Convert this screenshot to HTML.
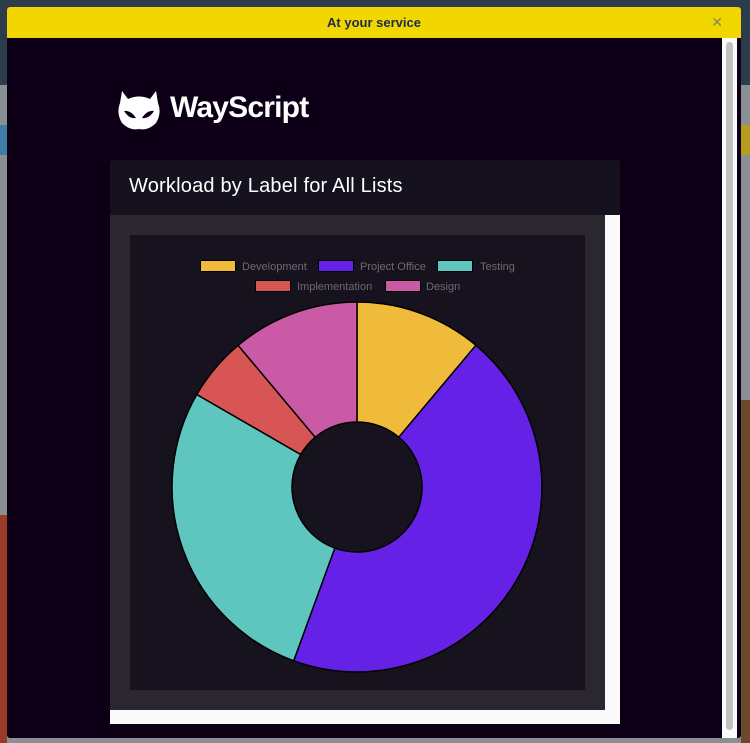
<!DOCTYPE html>
<html><head><meta charset="utf-8"><style>
*{margin:0;padding:0;box-sizing:border-box}
body{width:750px;height:743px;overflow:hidden;position:relative;background:#8a8f94;font-family:"Liberation Sans",sans-serif}
.bgtop{position:absolute;left:0;top:0;width:750px;height:85px;background:#2d3c4a}
.bgl1{position:absolute;left:0;top:125px;width:7px;height:30px;background:#3d7fa6}
.bgr1{position:absolute;left:741px;top:125px;width:9px;height:30px;background:#b59c1c}
.bglo{position:absolute;left:0;top:515px;width:7px;height:228px;background:#9a3a2a}
.bgro{position:absolute;left:741px;top:400px;width:9px;height:343px;background:#6b4a2a}
.modal{position:absolute;left:7px;top:7px;width:734px;height:731px;background:#0d0016;border-radius:3px;overflow:hidden}
.hdr{height:31px;background:#f2d600;color:#1e2a4a;font-weight:bold;font-size:13px;text-align:center;line-height:31px}
.x{position:absolute;right:18px;top:0;line-height:31px;color:#8a8650;font-size:14px}
.track{position:absolute;left:715px;top:31px;width:15px;height:700px;background:#fafafa}
.thumb{position:absolute;left:719px;top:35px;width:7px;height:688px;background:#c1c1c1;border-radius:4px}
.logo{position:absolute;left:170px;top:91px;color:#fff;font-weight:bold;font-size:30px;letter-spacing:-0.8px}
.ch{position:absolute;left:110px;top:160px;width:510px;height:55px;background:#15111e;border-radius:3px 3px 0 0;color:#fff;font-size:20px;padding:15px 0 0 19px;letter-spacing:0.2px}
.white{position:absolute;left:110px;top:215px;width:510px;height:509px;background:#fafafa}
.gray{position:absolute;left:110px;top:215px;width:495px;height:495px;background:#2a2730}
.inner{position:absolute;left:130px;top:235px;width:455px;height:455px;background:#16121e}
</style></head><body>
<div class="bgtop"></div><div class="bgl1"></div><div class="bgr1"></div><div class="bglo"></div><div class="bgro"></div>
<div class="modal"><div class="hdr">At your service</div><div class="x">✕</div>
<div class="track"></div><div class="thumb"></div></div>
<svg style="position:absolute;left:116px;top:91px" width="46" height="40" viewBox="0 0 46 40">
<path d="M6 0 L12 8 Q23 3 34 8 L40 0 L42 12 Q46 22 40 32 Q32 40 23 38 Q14 40 6 32 Q0 22 4 12 Z" fill="#fff"/>
<path d="M8 20 Q15 19 20 27 Q13 28 8 20Z M38 20 Q31 19 26 27 Q33 28 38 20Z" fill="#0d0016"/>
</svg>
<div class="logo">WayScript</div>
<div class="ch">Workload by Label for All Lists</div>
<div class="white"></div><div class="gray"></div><div class="inner"></div>
<svg style="position:absolute;left:0;top:0" width="750" height="743">
<g font-family="Liberation Sans,sans-serif" font-size="11" fill="#6e6a74">
<rect x="200.5" y="260.5" width="35" height="11" fill="#f0bb3a" stroke="#000"/><text x="242" y="270">Development</text>
<rect x="318.5" y="260.5" width="35" height="11" fill="#6522e6" stroke="#000"/><text x="360" y="270">Project Office</text>
<rect x="437.5" y="260.5" width="35" height="11" fill="#5fc6bf" stroke="#000"/><text x="480" y="270">Testing</text>
<rect x="255.5" y="280.5" width="35" height="11" fill="#d85555" stroke="#000"/><text x="297" y="290">Implementation</text>
<rect x="385.5" y="280.5" width="35" height="11" fill="#cb5aa6" stroke="#000"/><text x="426" y="290">Design</text>
</g>
<g stroke="#000" stroke-width="1.5">
<path d="M357 302 A185 185 0 0 1 475.9 345.3 L398.8 437.2 A65 65 0 0 0 357 422Z" fill="#f0bb3a"/>
<path d="M475.9 345.3 A185 185 0 0 1 293.7 660.8 L334.8 548.1 A65 65 0 0 0 398.8 437.2Z" fill="#6522e6"/>
<path d="M293.7 660.8 A185 185 0 0 1 196.8 394.5 L300.7 454.5 A65 65 0 0 0 334.8 548.1Z" fill="#5fc6bf"/>
<path d="M196.8 394.5 A185 185 0 0 1 238.1 345.3 L315.2 437.2 A65 65 0 0 0 300.7 454.5Z" fill="#d85555"/>
<path d="M238.1 345.3 A185 185 0 0 1 357 302 L357 422 A65 65 0 0 0 315.2 437.2Z" fill="#cb5aa6"/>
</g>
</svg>
</body></html>
